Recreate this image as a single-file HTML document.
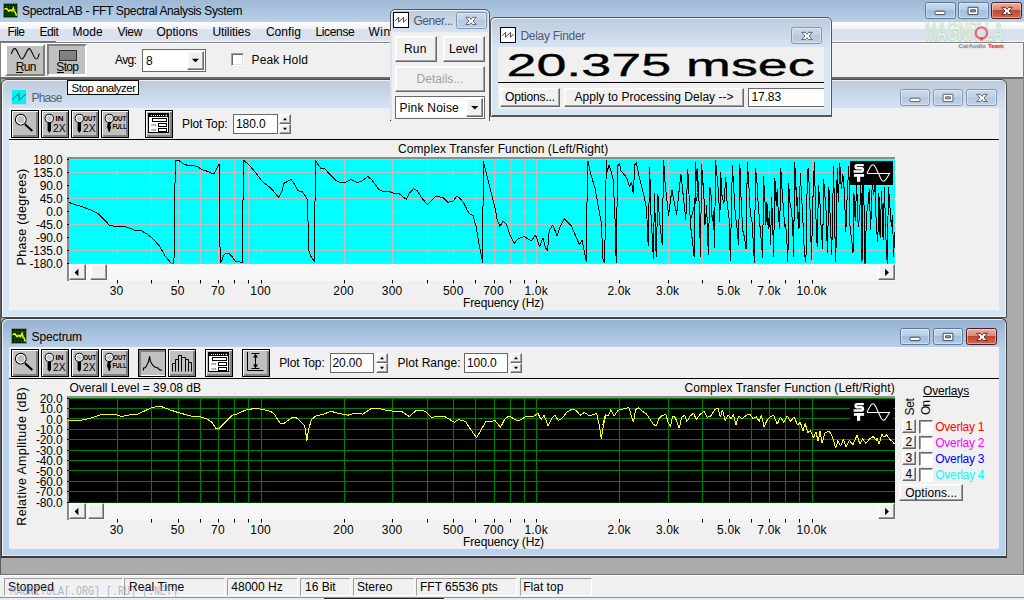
<!DOCTYPE html><html><head><meta charset="utf-8"><title>SpectraLAB</title><style>
html,body{margin:0;padding:0;}
body{width:1024px;height:600px;overflow:hidden;background:#ababab;position:relative;font-family:"Liberation Sans",sans-serif;}
div,span.t,svg{position:absolute;box-sizing:border-box;}
span.t{white-space:pre;}
.L{position:absolute;left:0;top:0;width:1024px;height:600px;overflow:hidden;}
</style></head><body>
<div style="left:0px;top:0px;width:1024px;height:22px;background:linear-gradient(#9eb8d5,#b9d1ea);"></div>
<svg style="left:3px;top:3px" width="15" height="15" viewBox="0 0 16 16"><rect x="0" y="0" width="16" height="16" fill="#8a8a8a"/><rect x="1" y="1" width="14" height="14" fill="#001800"/><path d="M4 1V15M7 1V15M10 1V15M13 1V15M1 4H15M1 7H15M1 10H15M1 13H15" stroke="#0a5a0a" stroke-width="1"/><path d="M1.5 6.5 L4 6 L6 8.5 L8 7.5 L9.5 8.5 L11 5.5 L12 9 L13 10 L14.5 13.5" stroke="#f4f400" stroke-width="1.6" fill="none"/></svg>
<span class="t" style="left:22.00px;top:2.50px;font-size:12px;line-height:16px;color:#000;letter-spacing:-0.351px;">SpectraLAB - FFT Spectral Analysis System</span>
<div style="left:925px;top:2px;width:30.5px;height:17px;background:linear-gradient(#c9daee 0%,#b7cde6 45%,#a3bddb 50%,#b4cae4 100%);border:1px solid #5f7a99;border-radius:2.5px;box-shadow:inset 0 0 0 1px rgba(255,255,255,.4);"></div>
<svg style="left:932.45px;top:4.5px" width="16" height="12" viewBox="-8 -6 16 12"><rect x="-5" y="0.2" width="10" height="3.4" rx="0.8" fill="#fff" stroke="#434a58" stroke-width="1"/></svg>
<div style="left:958px;top:2px;width:30.5px;height:17px;background:linear-gradient(#c9daee 0%,#b7cde6 45%,#a3bddb 50%,#b4cae4 100%);border:1px solid #5f7a99;border-radius:2.5px;box-shadow:inset 0 0 0 1px rgba(255,255,255,.4);"></div>
<svg style="left:965.45px;top:4.5px" width="16" height="12" viewBox="-8 -6 16 12"><path d="M-4.9 -3.7 H4.9 V3.6 H-4.9 Z M-2.4 -1.2 H2.4 V0.8 H-2.4 Z" fill="#fff" fill-rule="evenodd" stroke="#434a58" stroke-width="1" stroke-linejoin="round"/></svg>
<div style="left:991px;top:2px;width:31px;height:17px;background:linear-gradient(#e9b0a2 0%,#d98a78 45%,#c4452c 50%,#cf6a54 100%);border:1px solid #4b1a22;border-radius:2.5px;box-shadow:inset 0 0 0 1px rgba(255,255,255,.4);"></div>
<svg style="left:998.7px;top:4.5px" width="16" height="12" viewBox="-8 -6 16 12"><path d="M-5.3 -3.7 L-1.7 -3.7 L0 -1.7 L1.7 -3.7 L5.3 -3.7 L2 0 L5.3 3.6 L1.7 3.6 L0 1.7 L-1.7 3.6 L-5.3 3.6 L-2 0 Z" fill="#fff" stroke="#5a2a2a" stroke-width="1" stroke-linejoin="round"/></svg>
<div style="left:0px;top:22px;width:1024px;height:20px;background:linear-gradient(#ffffff 0%,#f1f3f9 33%,#dde2ef 36%,#dadfee 85%,#e9ecf5 100%);"></div>
<div style="left:0px;top:41px;width:56px;height:1px;background:#3c7fb1;"></div>
<div style="left:56px;top:41px;width:968px;height:1px;background:#f4f6fb;"></div>
<span class="t" style="left:7.40px;top:23.60px;font-size:12px;line-height:16px;color:#000;letter-spacing:-0.584px;">File</span>
<span class="t" style="left:39.40px;top:23.60px;font-size:12px;line-height:16px;color:#000;letter-spacing:-0.419px;">Edit</span>
<span class="t" style="left:72.40px;top:23.60px;font-size:12px;line-height:16px;color:#000;letter-spacing:0.121px;">Mode</span>
<span class="t" style="left:117.40px;top:23.60px;font-size:12px;line-height:16px;color:#000;letter-spacing:-0.252px;">View</span>
<span class="t" style="left:156.40px;top:23.60px;font-size:12px;line-height:16px;color:#000;letter-spacing:0.021px;">Options</span>
<span class="t" style="left:212.40px;top:23.60px;font-size:12px;line-height:16px;color:#000;letter-spacing:-0.075px;">Utilities</span>
<span class="t" style="left:265.90px;top:23.60px;font-size:12px;line-height:16px;color:#000;letter-spacing:0.052px;">Config</span>
<span class="t" style="left:315.40px;top:23.60px;font-size:12px;line-height:16px;color:#000;letter-spacing:-0.337px;">License</span>
<span class="t" style="left:368.40px;top:23.60px;font-size:12px;line-height:16px;color:#000;letter-spacing:0.553px;">Window</span>
<div style="left:0px;top:42px;width:1024px;height:35px;background:#f0f0f0;border-top:1px solid #808080;border-left:1px solid #808080;box-shadow:inset 1px 1px 0 #fff;"></div>
<div style="left:0px;top:77px;width:1024px;height:2px;background:#6a6a6a;"></div>
<div style="left:1023px;top:42px;width:1px;height:37px;background:#808080;"></div>
<div style="left:2px;top:43px;width:43px;height:32px;background:#fff;"></div>
<div style="left:5px;top:44px;width:40px;height:32px;background:#c0c0c0;border:2px solid;border-color:#fff #808080 #808080 #fff;"></div>
<svg style="left:5px;top:44px" width="40" height="32" viewBox="5 44 40 32"><path d="M11.5 54 C12.5 49.5 14 48.6 15 48.6 C17 48.6 19.5 59 22 59 C24.5 59 27 48.6 29.2 48.6 C31.5 48.6 33.8 59 36 59 C37.5 59 38.6 56.5 39.3 53.5" fill="none" stroke="#000" stroke-width="1.1"/></svg>
<span class="t" style="left:15.70px;top:58.80px;font-size:12px;line-height:16px;color:#000;letter-spacing:-0.671px;">Run</span>
<div style="left:16px;top:72px;width:7px;height:1px;background:#000;"></div>
<div style="left:47px;top:44px;width:40px;height:32px;background:#c0c0c0;border:2px solid;border-color:#808080 #fff #fff #808080;"></div>
<div style="left:59px;top:50px;width:18px;height:11px;background:#808080;border:1px solid #303030;"></div>
<span class="t" style="left:56.30px;top:58.80px;font-size:12px;line-height:16px;color:#000;letter-spacing:-0.671px;">Stop</span>
<div style="left:57px;top:72px;width:7px;height:1px;background:#000;"></div>
<span class="t" style="left:115.00px;top:52.00px;font-size:12px;line-height:16px;color:#000;letter-spacing:-0.628px;">Avg:</span>
<div style="left:142px;top:49px;width:64px;height:23px;background:#fff;border:1px solid #696969;"></div>
<span class="t" style="left:146.00px;top:52.80px;font-size:12px;line-height:16px;color:#000;">8</span>
<div style="left:187px;top:51px;width:17px;height:19px;background:#f0f0f0;border:1px solid;border-color:#fff #696969 #696969 #fff;box-shadow:inset -1px -1px 0 #a0a0a0,inset 1px 1px 0 #f8f8f8;"></div>
<svg style="left:187px;top:51px" width="17" height="19"><path d="M8.5 11.3 l-3.6 -3.6 h7.2 z" fill="#000"/></svg>
<div style="left:231px;top:53px;width:13px;height:13px;background:#fff;border:1px solid;border-color:#a0a0a0 #fff #fff #a0a0a0;box-shadow:inset 1px 1px 0 #696969,inset -1px -1px 0 #e3e3e3;"></div>
<span class="t" style="left:251.50px;top:52.00px;font-size:12px;line-height:16px;color:#000;letter-spacing:0.126px;">Peak Hold</span>
<div style="left:0px;top:79px;width:1024px;height:495px;background:#ababab;border-left:1px solid #5a5a5a;border-right:1px solid #808080;"></div>
<div style="left:0px;top:574px;width:1024px;height:23px;background:#f0f0f0;border-top:1px solid #747474;box-shadow:inset 0 1px 0 #fff;"></div>
<div style="left:4px;top:578px;width:119px;height:17.6px;border:1px solid;border-color:#a0a0a0 #fff #fff #a0a0a0;"></div>
<span class="t" style="left:8.00px;top:579.10px;font-size:12px;line-height:16px;color:#000;letter-spacing:0.185px;">Stopped</span>
<div style="left:124px;top:578px;width:101px;height:17.6px;border:1px solid;border-color:#a0a0a0 #fff #fff #a0a0a0;"></div>
<span class="t" style="left:129.00px;top:579.10px;font-size:12px;line-height:16px;color:#000;letter-spacing:0.147px;">Real Time</span>
<div style="left:227px;top:578px;width:71px;height:17.6px;border:1px solid;border-color:#a0a0a0 #fff #fff #a0a0a0;"></div>
<span class="t" style="left:231.30px;top:579.10px;font-size:12px;line-height:16px;color:#000;letter-spacing:0.016px;">48000 Hz</span>
<div style="left:300px;top:578px;width:51px;height:17.6px;border:1px solid;border-color:#a0a0a0 #fff #fff #a0a0a0;"></div>
<span class="t" style="left:305.00px;top:579.10px;font-size:12px;line-height:16px;color:#000;">16 Bit</span>
<div style="left:353px;top:578px;width:62px;height:17.6px;border:1px solid;border-color:#a0a0a0 #fff #fff #a0a0a0;"></div>
<span class="t" style="left:357.00px;top:579.10px;font-size:12px;line-height:16px;color:#000;">Stereo</span>
<div style="left:416px;top:578px;width:101px;height:17.6px;border:1px solid;border-color:#a0a0a0 #fff #fff #a0a0a0;"></div>
<span class="t" style="left:420.00px;top:579.10px;font-size:12px;line-height:16px;color:#000;">FFT 65536 pts</span>
<div style="left:519.5px;top:578px;width:72.5px;height:17.6px;border:1px solid;border-color:#a0a0a0 #fff #fff #a0a0a0;"></div>
<span class="t" style="left:523.30px;top:579.10px;font-size:12px;line-height:16px;color:#000;letter-spacing:-0.002px;">Flat top</span>
<div style="left:0px;top:597px;width:1024px;height:3px;background:#e8edf3;"></div>
<div style="left:324px;top:598px;width:120px;height:1px;background:#222;border-radius:1px;"></div>
<div style="left:325px;top:599px;width:118px;height:1px;background:#fff;"></div>
<div style="left:0px;top:596.5px;width:1024px;height:1px;background:#8f8f8f;"></div>
<span class="t" style="left:10px;top:587.6px;transform:scale(1,1.22);transform-origin:0 100%;font-family:'Liberation Mono',monospace;font-size:10px;line-height:12px;color:rgba(140,165,190,.75);letter-spacing:0.0px;">MAGNITOLA[.ORG] [.RU] [.NET]</span>
<div style="left:1px;top:79px;width:1006px;height:239px;background:linear-gradient(#bbcadb 0px,#c8d7e7 14px,#d6e3f1 29px,#d7e4f2 30px,#d7e4f2 100%);border:1px solid #4a4a4a;border-bottom-width:1px;border-radius:6px 6px 0 0;box-shadow:inset 1px 1px 0 rgba(255,255,255,.75),inset -1px -1px 0 #eef4fb;"></div>
<div style="left:9px;top:108px;width:990px;height:1px;background:#eef3f9;"></div>
<div style="left:9px;top:109px;width:990px;height:201px;background:#f0f0f0;"></div>
<svg style="left:11px;top:89px" width="16" height="16" viewBox="0 0 16 16"><rect x="0.5" y="0.5" width="15" height="15" fill="#00f4f4" stroke="#cdd2d6"/><path d="M1 10.6 L8 4.4 V11.3 L14.8 5" stroke="#0a4a50" stroke-width="0.85" fill="none"/></svg>
<span class="t" style="left:31.50px;top:89.50px;font-size:12px;line-height:16px;color:#525f73;letter-spacing:-0.805px;">Phase</span>
<div style="left:900px;top:89px;width:30px;height:17px;background:linear-gradient(#cbd9ea 0%,#c2d2e6 45%,#b5c8df 50%,#c0d1e5 100%);border:1px solid #8296b3;border-radius:2.5px;box-shadow:inset 0 0 0 1px rgba(255,255,255,.4);"></div>
<svg style="left:907.2px;top:91.5px" width="16" height="12" viewBox="-8 -6 16 12"><rect x="-5" y="0.2" width="10" height="3.4" rx="0.8" fill="#fff" stroke="#5a6270" stroke-width="1"/></svg>
<div style="left:933px;top:89px;width:30px;height:17px;background:linear-gradient(#cbd9ea 0%,#c2d2e6 45%,#b5c8df 50%,#c0d1e5 100%);border:1px solid #8296b3;border-radius:2.5px;box-shadow:inset 0 0 0 1px rgba(255,255,255,.4);"></div>
<svg style="left:940.2px;top:91.5px" width="16" height="12" viewBox="-8 -6 16 12"><path d="M-4.9 -3.7 H4.9 V3.6 H-4.9 Z M-2.4 -1.2 H2.4 V0.8 H-2.4 Z" fill="#fff" fill-rule="evenodd" stroke="#5a6270" stroke-width="1" stroke-linejoin="round"/></svg>
<div style="left:966px;top:89px;width:31px;height:17px;background:linear-gradient(#cbd9ea 0%,#c2d2e6 45%,#b5c8df 50%,#c0d1e5 100%);border:1px solid #8296b3;border-radius:2.5px;box-shadow:inset 0 0 0 1px rgba(255,255,255,.4);"></div>
<svg style="left:973.7px;top:91.5px" width="16" height="12" viewBox="-8 -6 16 12"><path d="M-5.3 -3.7 L-1.7 -3.7 L0 -1.7 L1.7 -3.7 L5.3 -3.7 L2 0 L5.3 3.6 L1.7 3.6 L0 1.7 L-1.7 3.6 L-5.3 3.6 L-2 0 Z" fill="#fff" stroke="#5a6270" stroke-width="1" stroke-linejoin="round"/></svg>
<div style="left:11px;top:110px;width:28px;height:28px;background:#c0c0c0;border:1px solid #000;box-shadow:inset 1px 1px 0 #fff,inset -1px -1px 0 #808080,inset -2px -2px 0 #808080;"></div>
<svg style="left:11px;top:110px" width="28" height="28" viewBox="0 0 28 28"><circle cx="9.8" cy="9.7" r="5.3" fill="#c0c0c0" stroke="#000" stroke-width="1.1"/><circle cx="9.8" cy="9.7" r="4.2" fill="none" stroke="#fff" stroke-width="1.1"/><path d="M14 14.2 L21.3 21" stroke="#000" stroke-width="2.1"/></svg>
<div style="left:41px;top:110px;width:28px;height:28px;background:#c0c0c0;border:1px solid #000;box-shadow:inset 1px 1px 0 #fff,inset -1px -1px 0 #808080,inset -2px -2px 0 #808080;"></div>
<svg style="left:41px;top:110px" width="28" height="28" viewBox="0 0 28 28"><circle cx="8.3" cy="8.4" r="4.1" fill="#c8c8c8" stroke="#000" stroke-width="1"/><circle cx="8.3" cy="8.4" r="3.1" fill="none" stroke="#fff" stroke-width="0.9"/><path d="M6.6 12.9 H10 V20.3 L8.3 23 L6.6 20.3 Z" fill="#000"/><text x="14.5" y="11" font-family="Liberation Sans" font-size="7.5" font-weight="bold" fill="#000" textLength="8" lengthAdjust="spacingAndGlyphs">IN</text><text x="12" y="21.5" font-family="Liberation Sans" font-size="11.5" fill="#000" textLength="12.5" lengthAdjust="spacingAndGlyphs">2X</text></svg>
<div style="left:71px;top:110px;width:28px;height:28px;background:#c0c0c0;border:1px solid #000;box-shadow:inset 1px 1px 0 #fff,inset -1px -1px 0 #808080,inset -2px -2px 0 #808080;"></div>
<svg style="left:71px;top:110px" width="28" height="28" viewBox="0 0 28 28"><circle cx="8.3" cy="8.4" r="4.1" fill="#c8c8c8" stroke="#000" stroke-width="1"/><circle cx="8.3" cy="8.4" r="3.1" fill="none" stroke="#fff" stroke-width="0.9"/><path d="M6.6 12.9 H10 V20.3 L8.3 23 L6.6 20.3 Z" fill="#000"/><text x="12.5" y="11" font-family="Liberation Sans" font-size="7.5" font-weight="bold" fill="#000" textLength="12.5" lengthAdjust="spacingAndGlyphs">OUT</text><text x="12" y="21.5" font-family="Liberation Sans" font-size="11.5" fill="#000" textLength="12.5" lengthAdjust="spacingAndGlyphs">2X</text></svg>
<div style="left:101px;top:110px;width:28px;height:28px;background:#c0c0c0;border:1px solid #000;box-shadow:inset 1px 1px 0 #fff,inset -1px -1px 0 #808080,inset -2px -2px 0 #808080;"></div>
<svg style="left:101px;top:110px" width="28" height="28" viewBox="0 0 28 28"><circle cx="8.3" cy="8.4" r="4.1" fill="#c8c8c8" stroke="#000" stroke-width="1"/><circle cx="8.3" cy="8.4" r="3.1" fill="none" stroke="#fff" stroke-width="0.9"/><path d="M7.5 12.3 L6.3 16.5 L8.3 22 L9.6 17 L8.8 15 L10 12.5 Z" fill="#000" stroke="#000" stroke-width="0.8"/><text x="12.5" y="11" font-family="Liberation Sans" font-size="7.5" font-weight="bold" fill="#000" textLength="12.5" lengthAdjust="spacingAndGlyphs">OUT</text><text x="11.5" y="19" font-family="Liberation Sans" font-size="7" font-weight="bold" fill="#000" textLength="14" lengthAdjust="spacingAndGlyphs">FULL</text></svg>
<div style="left:145px;top:110px;width:28px;height:28px;background:#c0c0c0;border:1px solid #000;box-shadow:inset 1px 1px 0 #fff,inset -1px -1px 0 #808080,inset -2px -2px 0 #808080;"></div>
<svg style="left:145px;top:110px" width="28" height="28" viewBox="0 0 28 28"><rect x="3.5" y="3.5" width="20" height="19" fill="#fff" stroke="#000" stroke-width="1"/><rect x="4" y="4" width="19" height="3" fill="#000"/><path d="M6 5.5 H19" stroke="#fff" stroke-width="1" stroke-dasharray="1 1"/><rect x="20.5" y="4.8" width="1.5" height="1.4" fill="#fff"/><rect x="7.5" y="8.5" width="14" height="3" fill="#fff" stroke="#000" stroke-width="1"/><rect x="13.5" y="13.5" width="8" height="3" fill="#fff" stroke="#000" stroke-width="1"/><rect x="13.5" y="18.5" width="8" height="3" fill="#fff" stroke="#000" stroke-width="1"/><path d="M6.5 15 H11 M6.5 20 H11" stroke="#222" stroke-width="1.2" stroke-dasharray="1.1 0.6"/></svg>
<span class="t" style="left:182.00px;top:116.30px;font-size:12px;line-height:16px;color:#000;letter-spacing:-0.114px;">Plot Top:</span>
<div style="left:232.5px;top:114px;width:45px;height:20px;background:#fff;border:1px solid #696969;"></div>
<span class="t" style="left:236.00px;top:116.30px;font-size:12px;line-height:16px;color:#000;letter-spacing:-0.106px;">180.0</span>
<div style="left:279px;top:114px;width:12px;height:10px;background:#f0f0f0;border:1px solid;border-color:#fff #696969 #696969 #fff;box-shadow:inset -1px -1px 0 #a0a0a0,inset 1px 1px 0 #f8f8f8;"></div>
<div style="left:279px;top:124px;width:12px;height:10px;background:#f0f0f0;border:1px solid;border-color:#fff #696969 #696969 #fff;box-shadow:inset -1px -1px 0 #a0a0a0,inset 1px 1px 0 #f8f8f8;"></div>
<svg style="left:279px;top:114px" width="12" height="20"><path d="M6 3.8 L8 6.3 H4 Z M6 16.2 L8 13.7 H4 Z" fill="#000"/></svg>
<div style="left:9px;top:139px;width:990px;height:1px;background:#000;"></div>
<span class="t" style="left:398.00px;top:140.50px;font-size:12px;line-height:16px;color:#000;letter-spacing:0.094px;">Complex Transfer Function (Left/Right)</span>
<div style="left:67px;top:157px;width:828px;height:106.5px;background:#00ffff;border-top:2px solid #8c8c8c;border-left:2px solid #8c8888;"></div>
<svg style="left:0px;top:0px" width="1024" height="600" viewBox="0 0 1024 600"><defs><clipPath id="cp"><rect x="69" y="159" width="826" height="104.5"/></clipPath></defs><g clip-path="url(#cp)"><path d="M68 159.5 H896 M68 172.5 H896 M68 185.5 H896 M68 198.5 H896 M68 211.5 H896 M68 224.5 H896 M68 237.5 H896 M68 250.5 H896 M68 263.5 H896 M117.5 159 V264 M151.5 159 V264 M178.5 159 V264 M200.5 159 V264 M218.5 159 V264 M234.5 159 V264 M248.5 159 V264 M261.5 159 V264 M344.5 159 V264 M392.5 159 V264 M427.5 159 V264 M453.5 159 V264 M475.5 159 V264 M494.5 159 V264 M510.5 159 V264 M524.5 159 V264 M536.5 159 V264 M619.5 159 V264 M668.5 159 V264 M702.5 159 V264 M729.5 159 V264 M751.5 159 V264 M769.5 159 V264 M785.5 159 V264 M799.5 159 V264 M812.5 159 V264 " stroke="#c0c0c0" stroke-width="1" fill="none"/><path d="M68.6 202.2 L75.0 204.8 L81.5 206.5 L90.1 209.7 L98.7 214.0 L109.4 225.2 L115.9 226.5 L122.3 226.1 L128.8 227.8 L135.2 230.4 L141.2 230.6 L148.1 234.9 L153.5 239.2 L159.9 246.7 L165.3 256.3 L171.3 263.2 L173.9 263.2 L174.5 237.0 L174.9 185.4 L176.0 160.3 L178.6 160.3 L182.5 163.3 L187.8 165.5 L193.2 165.5 L197.5 166.8 L202.9 170.0 L208.2 171.5 L212.1 173.6 L214.3 173.2 L216.8 168.3 L219.2 164.0 L219.4 212.3 L220.3 262.8 L221.6 260.6 L224.4 254.2 L228.7 253.3 L231.9 256.3 L235.1 261.1 L239.4 261.9 L242.2 263.2 L242.8 212.3 L243.7 160.3 L249.1 165.0 L255.5 172.6 L262.0 181.2 L269.5 187.0 L274.8 193.0 L270.0 187.0 L278.6 197.3 L281.8 191.9 L284.0 183.3 L287.2 181.6 L290.8 179.4 L293.6 182.7 L297.9 190.8 L302.2 191.5 L305.4 196.2 L307.2 199.0 L308.0 220.9 L308.9 251.0 L310.8 256.3 L314.5 261.7 L314.9 211.2 L315.5 160.3 L317.7 164.0 L320.9 168.3 L324.8 168.9 L330.2 174.7 L335.5 180.1 L339.8 182.4 L345.2 182.4 L351.2 179.4 L357.0 182.4 L361.3 181.6 L367.8 176.4 L372.1 180.1 L378.5 189.1 L382.8 191.3 L389.2 191.5 L393.5 193.2 L398.9 193.6 L406.4 199.4 L409.6 193.0 L413.5 188.7 L417.2 190.8 L422.5 199.0 L427.5 204.6 L435.9 196.2 L443.0 197.7 L447.9 202.2 L452.6 201.6 L456.9 196.2 L460.1 198.3 L464.4 204.1 L467.7 211.2 L470.2 214.5 L473.0 215.5 L476.3 227.3 L479.5 246.7 L482.7 262.8 L482.9 212.3 L483.8 161.2 L483.4 161.8 L486.4 173.6 L490.7 190.8 L495.0 208.0 L497.2 219.8 L499.8 226.3 L503.2 221.3 L506.2 224.1 L510.1 234.9 L514.4 243.5 L517.6 239.2 L524.0 236.4 L528.3 239.2 L531.6 240.7 L534.8 235.5 L536.3 237.0 L539.7 246.7 L542.9 237.7 L545.5 247.8 L547.5 251.0 L549.2 230.6 L552.6 225.2 L554.8 229.9 L556.9 235.9 L560.6 225.6 L564.4 218.8 L568.1 222.4 L571.3 225.6 L575.6 235.9 L579.3 244.5 L582.1 240.2 L584.2 251.0 L586.3 261.7 L586.8 212.3 L587.9 160.7 L590.6 173.6 L594.9 187.6 L598.2 205.9 L601.4 223.0 L602.9 258.5 L604.6 263.2 L605.5 214.5 L606.3 160.3 L607.4 171.5 L608.9 165.0 L611.1 171.5 L613.2 180.1 L614.9 214.5 L616.2 262.8 L616.9 214.5 L617.7 166.1 L619.6 163.3 L620.7 170.4 L626.1 176.9 L629.7 186.5 L631.5 182.2 L633.4 194.0 L634.7 165.0 L636.4 162.5 L639.0 175.8 L643.3 193.0 L646.5 208.0 L648.2 245.6 L649.7 167.2 L651.0 214.5 L653.4 258.5 L654.5 193.0 L656.2 257.4 L657.9 194.0 L659.6 220.9 L662.2 244.5 L663.7 160.3 L665.2 184.4 L668.6 215.5 L671.9 189.7 L676.6 214.5 L680.9 173.6 L685.8 219.8 L687.8 169.3 L690.5 225.2 L694.2 256.3 L695.5 162.9 L698.1 193.0 L690.0 221.9 L691.9 236.0 L694.1 256.7 L695.7 162.5 L696.6 181.4 L697.2 168.2 L698.5 188.9 L699.4 209.6 L700.4 256.7 L701.7 164.0 L702.8 185.1 L703.6 183.3 L704.7 224.7 L705.4 222.8 L706.6 204.9 L708.3 254.8 L709.8 187.0 L711.1 195.5 L712.2 220.9 L713.5 211.5 L714.5 248.2 L715.6 160.3 L717.3 179.5 L718.6 192.7 L719.8 221.9 L720.7 172.0 L722.0 195.5 L723.9 204.0 L725.8 176.7 L726.7 198.3 L727.7 207.7 L729.2 219.0 L730.3 260.5 L732.4 165.4 L733.7 187.0 L735.2 213.4 L736.7 224.7 L738.6 245.4 L739.9 164.4 L741.2 202.1 L742.7 230.3 L744.6 237.9 L746.1 249.2 L747.3 162.5 L748.8 183.3 L750.3 213.4 L752.2 222.8 L754.4 263.3 L755.5 168.2 L756.9 181.4 L758.2 204.0 L759.7 222.8 L761.2 239.8 L762.7 257.7 L763.5 175.7 L765.0 202.1 L765.9 224.7 L766.9 202.1 L768.2 228.5 L769.5 211.5 L770.6 245.4 L771.6 197.4 L772.9 230.3 L773.6 256.7 L774.8 177.6 L776.3 205.9 L777.2 188.9 L778.5 217.2 L779.7 228.5 L780.8 168.2 L782.3 194.6 L783.6 209.6 L784.6 226.6 L785.7 224.7 L787.0 243.5 L787.9 262.4 L788.7 183.3 L789.8 202.1 L791.3 209.6 L792.7 224.7 L793.6 256.7 L794.7 162.5 L796.0 187.0 L797.4 200.2 L798.9 228.5 L795.0 173.8 L796.5 198.3 L797.8 217.1 L799.1 228.4 L800.3 172.9 L801.6 196.4 L802.9 220.9 L804.4 252.9 L805.9 262.3 L807.4 170.1 L808.5 168.2 L810.1 211.5 L811.6 260.4 L812.3 219.0 L813.3 187.0 L814.4 162.5 L815.7 211.5 L817.2 247.2 L818.5 185.1 L820.0 203.9 L821.3 230.3 L822.7 249.1 L823.6 179.5 L824.7 192.6 L826.1 211.5 L827.4 252.9 L828.9 187.0 L830.2 217.1 L831.7 254.7 L833.6 166.3 L834.9 234.0 L835.8 262.3 L837.2 168.2 L838.3 202.0 L839.8 163.5 L841.3 188.9 L842.8 173.8 L844.3 190.8 L845.8 232.2 L847.3 192.6 L848.8 166.3 L850.1 230.3 L851.5 237.8 L853.0 252.9 L853.9 192.6 L855.2 220.9 L856.7 185.1 L858.2 226.5 L859.5 217.1 L860.9 185.1 L862.0 262.3 L863.3 162.5 L865.0 264.1 L866.5 215.2 L868.0 203.9 L869.3 188.9 L870.6 230.3 L872.2 185.1 L873.7 194.5 L875.0 183.2 L876.3 226.5 L877.8 241.6 L878.9 192.6 L880.1 237.8 L881.6 190.8 L883.1 239.7 L884.4 187.0 L885.9 237.8 L887.2 264.1 L888.5 187.0 L890.0 207.7 L891.3 226.5 L892.5 215.2 L893.6 256.6 L894.7 232.2" stroke="#000" stroke-width="1" fill="none" stroke-linejoin="bevel" shape-rendering="crispEdges"/></g></svg>
<div style="left:67px;top:159px;width:2px;height:1px;background:#000;"></div>
<div style="left:67px;top:172px;width:2px;height:1px;background:#000;"></div>
<div style="left:67px;top:185px;width:2px;height:1px;background:#000;"></div>
<div style="left:67px;top:198px;width:2px;height:1px;background:#000;"></div>
<div style="left:67px;top:211px;width:2px;height:1px;background:#000;"></div>
<div style="left:67px;top:224px;width:2px;height:1px;background:#000;"></div>
<div style="left:67px;top:237px;width:2px;height:1px;background:#000;"></div>
<div style="left:67px;top:250px;width:2px;height:1px;background:#000;"></div>
<div style="left:67px;top:263px;width:2px;height:1px;background:#000;"></div>
<svg style="left:850px;top:161px" width="43" height="24" viewBox="0 0 43 24"><rect width="43" height="24" fill="#000"/><path d="M13.8 4.1 H6.9 Q5.6 4.1 5.6 5.6 Q5.6 7.3 6.9 7.3 H11.5 Q12.9 7.3 12.9 8.9 Q12.9 10.5 11.5 10.5 H3.6" fill="none" stroke="#fff" stroke-width="2.4"/><rect x="3.9" y="13.1" width="10.2" height="2.7" fill="#fff"/><rect x="7" y="13.1" width="3.2" height="7.7" fill="#fff"/><path d="M17 12 L20.3 6 Q22.9 1.6 25.4 6 L31 18 Q33.4 22.3 36 18.2 L39.9 12 M17 12.4 H40" fill="none" stroke="#fff" stroke-width="1.05"/></svg>
<div style="left:68px;top:263.8px;width:827.5px;height:17px;background:#f7f7f7;"></div>
<div style="left:68.5px;top:264.3px;width:17px;height:16px;background:#f0f0f0;border:1px solid;border-color:#fff #696969 #696969 #fff;box-shadow:inset -1px -1px 0 #a0a0a0,inset 1px 1px 0 #f8f8f8;"></div>
<div style="left:90px;top:264.3px;width:16.5px;height:16px;background:#f0f0f0;border:1px solid;border-color:#fff #696969 #696969 #fff;box-shadow:inset -1px -1px 0 #a0a0a0,inset 1px 1px 0 #f8f8f8;"></div>
<div style="left:878px;top:264.3px;width:17px;height:16px;background:#f0f0f0;border:1px solid;border-color:#fff #696969 #696969 #fff;box-shadow:inset -1px -1px 0 #a0a0a0,inset 1px 1px 0 #f8f8f8;"></div>
<svg style="left:68px;top:263.8px" width="828" height="17"><path d="M6.6 8.5 l3.8 -3.8 v7.6 z" fill="#000"/><path d="M820.9 8.5 l-3.8 -3.8 v7.6 z" fill="#000"/></svg>
<div style="left:67px;top:264px;width:2px;height:17px;background:#8c8888;"></div>
<svg style="left:0px;top:280px" width="1024" height="4"><path d="M117.5 0 V3.5 M151.5 0 V3.5 M178.5 0 V3.5 M200.5 0 V3.5 M218.5 0 V3.5 M234.5 0 V3.5 M248.5 0 V3.5 M261.5 0 V3.5 M344.5 0 V3.5 M392.5 0 V3.5 M427.5 0 V3.5 M453.5 0 V3.5 M475.5 0 V3.5 M494.5 0 V3.5 M510.5 0 V3.5 M524.5 0 V3.5 M536.5 0 V3.5 M619.5 0 V3.5 M668.5 0 V3.5 M702.5 0 V3.5 M729.5 0 V3.5 M751.5 0 V3.5 M769.5 0 V3.5 M785.5 0 V3.5 M799.5 0 V3.5 M812.5 0 V3.5 " stroke="#000" stroke-width="1"/></svg>
<span class="t" style="left:109.74px;top:283.00px;font-size:12px;line-height:16px;color:#000;letter-spacing:0.200px;">30</span>
<span class="t" style="left:170.86px;top:283.00px;font-size:12px;line-height:16px;color:#000;letter-spacing:0.200px;">50</span>
<span class="t" style="left:211.12px;top:283.00px;font-size:12px;line-height:16px;color:#000;letter-spacing:0.200px;">70</span>
<span class="t" style="left:250.36px;top:283.00px;font-size:12px;line-height:16px;color:#000;letter-spacing:0.200px;">100</span>
<span class="t" style="left:333.29px;top:283.00px;font-size:12px;line-height:16px;color:#000;letter-spacing:0.200px;">200</span>
<span class="t" style="left:381.80px;top:283.00px;font-size:12px;line-height:16px;color:#000;letter-spacing:0.200px;">300</span>
<span class="t" style="left:442.92px;top:283.00px;font-size:12px;line-height:16px;color:#000;letter-spacing:0.200px;">500</span>
<span class="t" style="left:483.18px;top:283.00px;font-size:12px;line-height:16px;color:#000;letter-spacing:0.200px;">700</span>
<span class="t" style="left:524.49px;top:283.00px;font-size:12px;line-height:16px;color:#000;letter-spacing:0.170px;">1.0k</span>
<span class="t" style="left:607.42px;top:283.00px;font-size:12px;line-height:16px;color:#000;letter-spacing:0.170px;">2.0k</span>
<span class="t" style="left:655.93px;top:283.00px;font-size:12px;line-height:16px;color:#000;letter-spacing:0.170px;">3.0k</span>
<span class="t" style="left:717.05px;top:283.00px;font-size:12px;line-height:16px;color:#000;letter-spacing:0.170px;">5.0k</span>
<span class="t" style="left:757.31px;top:283.00px;font-size:12px;line-height:16px;color:#000;letter-spacing:0.170px;">7.0k</span>
<span class="t" style="left:796.55px;top:283.00px;font-size:12px;line-height:16px;color:#000;letter-spacing:0.176px;">10.0k</span>
<span class="t" style="left:463.00px;top:294.50px;font-size:12px;line-height:16px;color:#000;letter-spacing:-0.121px;">Frequency (Hz)</span>
<span class="t" style="left:33.37px;top:152.30px;font-size:12px;line-height:16px;color:#000;letter-spacing:-0.180px;">180.0</span>
<span class="t" style="left:33.37px;top:165.30px;font-size:12px;line-height:16px;color:#000;letter-spacing:-0.180px;">135.0</span>
<span class="t" style="left:39.85px;top:178.30px;font-size:12px;line-height:16px;color:#000;letter-spacing:-0.175px;">90.0</span>
<span class="t" style="left:39.85px;top:191.30px;font-size:12px;line-height:16px;color:#000;letter-spacing:-0.175px;">45.0</span>
<span class="t" style="left:46.32px;top:204.30px;font-size:12px;line-height:16px;color:#000;letter-spacing:-0.167px;">0.0</span>
<span class="t" style="left:35.97px;top:217.30px;font-size:12px;line-height:16px;color:#000;letter-spacing:-0.164px;">-45.0</span>
<span class="t" style="left:35.97px;top:230.30px;font-size:12px;line-height:16px;color:#000;letter-spacing:-0.164px;">-90.0</span>
<span class="t" style="left:29.50px;top:243.30px;font-size:12px;line-height:16px;color:#000;letter-spacing:-0.170px;">-135.0</span>
<span class="t" style="left:29.50px;top:256.30px;font-size:12px;line-height:16px;color:#000;letter-spacing:-0.170px;">-180.0</span>
<span class="t" style="left:-27.00px;top:209.00px;width:97.00px;height:16px;line-height:16px;font-size:12.5px;color:#000;letter-spacing:0.306px;transform:rotate(-90deg);transform-origin:50% 50%;">Phase (degrees)</span>
<div style="left:1px;top:318px;width:1006px;height:239.5px;background:linear-gradient(#96b1d0 0px,#a7c0dd 14px,#b8d0e9 29px,#b9d1ea 30px,#b9d1ea 100%);border:1px solid #3a3a3a;border-bottom-width:2px;border-radius:6px 6px 0 0;box-shadow:inset 1px 1px 0 rgba(255,255,255,.75),inset -1px -1px 0 #c8f0ff;"></div>
<div style="left:9px;top:347px;width:990px;height:1px;background:#f4f8fc;"></div>
<div style="left:9px;top:348px;width:990px;height:201px;background:#f0f0f0;"></div>
<svg style="left:11px;top:328px" width="16" height="16" viewBox="0 0 16 16"><rect x="0" y="0" width="16" height="16" fill="#8a8a8a"/><rect x="1" y="1" width="14" height="14" fill="#001800"/><path d="M4 1V15M7 1V15M10 1V15M13 1V15M1 4H15M1 7H15M1 10H15M1 13H15" stroke="#0a5a0a" stroke-width="1"/><path d="M1.5 6.5 L4 6 L6 8.5 L8 7.5 L9.5 8.5 L11 5.5 L12 9 L13 10 L14.5 13.5" stroke="#f4f400" stroke-width="1.6" fill="none"/></svg>
<span class="t" style="left:31.50px;top:328.50px;font-size:12px;line-height:16px;color:#000;letter-spacing:-0.106px;">Spectrum</span>
<div style="left:900px;top:328px;width:30px;height:17px;background:linear-gradient(#c9daee 0%,#b7cde6 45%,#a3bddb 50%,#b4cae4 100%);border:1px solid #5f7a99;border-radius:2.5px;box-shadow:inset 0 0 0 1px rgba(255,255,255,.4);"></div>
<svg style="left:907.2px;top:330.5px" width="16" height="12" viewBox="-8 -6 16 12"><rect x="-5" y="0.2" width="10" height="3.4" rx="0.8" fill="#fff" stroke="#434a58" stroke-width="1"/></svg>
<div style="left:933px;top:328px;width:30px;height:17px;background:linear-gradient(#c9daee 0%,#b7cde6 45%,#a3bddb 50%,#b4cae4 100%);border:1px solid #5f7a99;border-radius:2.5px;box-shadow:inset 0 0 0 1px rgba(255,255,255,.4);"></div>
<svg style="left:940.2px;top:330.5px" width="16" height="12" viewBox="-8 -6 16 12"><path d="M-4.9 -3.7 H4.9 V3.6 H-4.9 Z M-2.4 -1.2 H2.4 V0.8 H-2.4 Z" fill="#fff" fill-rule="evenodd" stroke="#434a58" stroke-width="1" stroke-linejoin="round"/></svg>
<div style="left:966px;top:328px;width:31px;height:17px;background:linear-gradient(#e9b0a2 0%,#d98a78 45%,#c4452c 50%,#cf6a54 100%);border:1px solid #4b1a22;border-radius:2.5px;box-shadow:inset 0 0 0 1px rgba(255,255,255,.4);"></div>
<svg style="left:973.7px;top:330.5px" width="16" height="12" viewBox="-8 -6 16 12"><path d="M-5.3 -3.7 L-1.7 -3.7 L0 -1.7 L1.7 -3.7 L5.3 -3.7 L2 0 L5.3 3.6 L1.7 3.6 L0 1.7 L-1.7 3.6 L-5.3 3.6 L-2 0 Z" fill="#fff" stroke="#5a2a2a" stroke-width="1" stroke-linejoin="round"/></svg>
<div style="left:11px;top:349px;width:28px;height:28px;background:#c0c0c0;border:1px solid #000;box-shadow:inset 1px 1px 0 #fff,inset -1px -1px 0 #808080,inset -2px -2px 0 #808080;"></div>
<svg style="left:11px;top:349px" width="28" height="28" viewBox="0 0 28 28"><circle cx="9.8" cy="9.7" r="5.3" fill="#c0c0c0" stroke="#000" stroke-width="1.1"/><circle cx="9.8" cy="9.7" r="4.2" fill="none" stroke="#fff" stroke-width="1.1"/><path d="M14 14.2 L21.3 21" stroke="#000" stroke-width="2.1"/></svg>
<div style="left:41px;top:349px;width:28px;height:28px;background:#c0c0c0;border:1px solid #000;box-shadow:inset 1px 1px 0 #fff,inset -1px -1px 0 #808080,inset -2px -2px 0 #808080;"></div>
<svg style="left:41px;top:349px" width="28" height="28" viewBox="0 0 28 28"><circle cx="8.3" cy="8.4" r="4.1" fill="#c8c8c8" stroke="#000" stroke-width="1"/><circle cx="8.3" cy="8.4" r="3.1" fill="none" stroke="#fff" stroke-width="0.9"/><path d="M6.6 12.9 H10 V20.3 L8.3 23 L6.6 20.3 Z" fill="#000"/><text x="14.5" y="11" font-family="Liberation Sans" font-size="7.5" font-weight="bold" fill="#000" textLength="8" lengthAdjust="spacingAndGlyphs">IN</text><text x="12" y="21.5" font-family="Liberation Sans" font-size="11.5" fill="#000" textLength="12.5" lengthAdjust="spacingAndGlyphs">2X</text></svg>
<div style="left:71px;top:349px;width:28px;height:28px;background:#c0c0c0;border:1px solid #000;box-shadow:inset 1px 1px 0 #fff,inset -1px -1px 0 #808080,inset -2px -2px 0 #808080;"></div>
<svg style="left:71px;top:349px" width="28" height="28" viewBox="0 0 28 28"><circle cx="8.3" cy="8.4" r="4.1" fill="#c8c8c8" stroke="#000" stroke-width="1"/><circle cx="8.3" cy="8.4" r="3.1" fill="none" stroke="#fff" stroke-width="0.9"/><path d="M6.6 12.9 H10 V20.3 L8.3 23 L6.6 20.3 Z" fill="#000"/><text x="12.5" y="11" font-family="Liberation Sans" font-size="7.5" font-weight="bold" fill="#000" textLength="12.5" lengthAdjust="spacingAndGlyphs">OUT</text><text x="12" y="21.5" font-family="Liberation Sans" font-size="11.5" fill="#000" textLength="12.5" lengthAdjust="spacingAndGlyphs">2X</text></svg>
<div style="left:101px;top:349px;width:28px;height:28px;background:#c0c0c0;border:1px solid #000;box-shadow:inset 1px 1px 0 #fff,inset -1px -1px 0 #808080,inset -2px -2px 0 #808080;"></div>
<svg style="left:101px;top:349px" width="28" height="28" viewBox="0 0 28 28"><circle cx="8.3" cy="8.4" r="4.1" fill="#c8c8c8" stroke="#000" stroke-width="1"/><circle cx="8.3" cy="8.4" r="3.1" fill="none" stroke="#fff" stroke-width="0.9"/><path d="M7.5 12.3 L6.3 16.5 L8.3 22 L9.6 17 L8.8 15 L10 12.5 Z" fill="#000" stroke="#000" stroke-width="0.8"/><text x="12.5" y="11" font-family="Liberation Sans" font-size="7.5" font-weight="bold" fill="#000" textLength="12.5" lengthAdjust="spacingAndGlyphs">OUT</text><text x="11.5" y="19" font-family="Liberation Sans" font-size="7" font-weight="bold" fill="#000" textLength="14" lengthAdjust="spacingAndGlyphs">FULL</text></svg>
<div style="left:138px;top:349px;width:28px;height:28px;background:#c0c0c0;border:1px solid #000;box-shadow:inset 1px 1px 0 #808080,inset 2px 2px 0 #808080,inset 0 -1px 0 #fff;"></div>
<svg style="left:138px;top:349px" width="28" height="28" viewBox="0 0 28 28"><path d="M5.4 21.4 V19.2 L7.5 18.6 L9 15.8 L10.4 13 L11.6 7.3 L12.4 12.3 L14.4 15.7 L16.4 17.8 L19.8 19.1 L21.9 20.9 L24 21.2" fill="none" stroke="#000" stroke-width="1.1"/></svg>
<div style="left:168px;top:349px;width:28px;height:28px;background:#c0c0c0;border:1px solid #000;box-shadow:inset 1px 1px 0 #fff,inset -1px -1px 0 #808080,inset -2px -2px 0 #808080;"></div>
<svg style="left:168px;top:349px" width="28" height="28" viewBox="0 0 28 28"><path d="M4.5 22.5 V14.5 H7.5 V22.5 M7.5 14.5 V10.5 H10.5 V22.5 M10.5 10.5 V6.5 H13.5 V22.5 M13.5 8.5 H17.5 V22.5 M17.5 10.5 H20.5 V22.5 M20.5 13.5 H23.5 V22.5" fill="none" stroke="#000" stroke-width="1"/></svg>
<div style="left:205px;top:349px;width:28px;height:28px;background:#c0c0c0;border:1px solid #000;box-shadow:inset 1px 1px 0 #fff,inset -1px -1px 0 #808080,inset -2px -2px 0 #808080;"></div>
<svg style="left:205px;top:349px" width="28" height="28" viewBox="0 0 28 28"><rect x="3.5" y="3.5" width="20" height="19" fill="#fff" stroke="#000" stroke-width="1"/><rect x="4" y="4" width="19" height="3" fill="#000"/><path d="M6 5.5 H19" stroke="#fff" stroke-width="1" stroke-dasharray="1 1"/><rect x="20.5" y="4.8" width="1.5" height="1.4" fill="#fff"/><rect x="7.5" y="8.5" width="14" height="3" fill="#fff" stroke="#000" stroke-width="1"/><rect x="13.5" y="13.5" width="8" height="3" fill="#fff" stroke="#000" stroke-width="1"/><rect x="13.5" y="18.5" width="8" height="3" fill="#fff" stroke="#000" stroke-width="1"/><path d="M6.5 15 H11 M6.5 20 H11" stroke="#222" stroke-width="1.2" stroke-dasharray="1.1 0.6"/></svg>
<div style="left:242px;top:349px;width:28px;height:28px;background:#c0c0c0;border:1px solid #000;box-shadow:inset 1px 1px 0 #fff,inset -1px -1px 0 #808080,inset -2px -2px 0 #808080;"></div>
<svg style="left:242px;top:349px" width="28" height="28" viewBox="0 0 28 28"><path d="M5.5 3 V21.5 H21.5" fill="none" stroke="#000" stroke-width="1"/><path d="M9.5 4.5 H17.5 M9.5 19.5 H17.5 M13.5 5 V19" stroke="#000" stroke-width="1" fill="none"/><path d="M13.5 4.8 L16 8.5 H11 Z M13.5 19.2 L16 15.5 H11 Z" fill="#000"/></svg>
<span class="t" style="left:279.20px;top:355.30px;font-size:12px;line-height:16px;color:#000;letter-spacing:-0.114px;">Plot Top:</span>
<div style="left:330px;top:353px;width:44px;height:20px;background:#fff;border:1px solid #696969;"></div>
<span class="t" style="left:332.50px;top:355.30px;font-size:12px;line-height:16px;color:#000;letter-spacing:-0.106px;">20.00</span>
<div style="left:376px;top:353px;width:12px;height:10px;background:#f0f0f0;border:1px solid;border-color:#fff #696969 #696969 #fff;box-shadow:inset -1px -1px 0 #a0a0a0,inset 1px 1px 0 #f8f8f8;"></div>
<div style="left:376px;top:363px;width:12px;height:10px;background:#f0f0f0;border:1px solid;border-color:#fff #696969 #696969 #fff;box-shadow:inset -1px -1px 0 #a0a0a0,inset 1px 1px 0 #f8f8f8;"></div>
<svg style="left:376px;top:353px" width="12" height="20"><path d="M6 3.8 L8 6.3 H4 Z M6 16.2 L8 13.7 H4 Z" fill="#000"/></svg>
<span class="t" style="left:397.50px;top:355.30px;font-size:12px;line-height:16px;color:#000;letter-spacing:0.027px;">Plot Range:</span>
<div style="left:464px;top:353px;width:44px;height:20px;background:#fff;border:1px solid #696969;"></div>
<span class="t" style="left:467.00px;top:355.30px;font-size:12px;line-height:16px;color:#000;letter-spacing:-0.106px;">100.0</span>
<div style="left:510px;top:353px;width:12px;height:10px;background:#f0f0f0;border:1px solid;border-color:#fff #696969 #696969 #fff;box-shadow:inset -1px -1px 0 #a0a0a0,inset 1px 1px 0 #f8f8f8;"></div>
<div style="left:510px;top:363px;width:12px;height:10px;background:#f0f0f0;border:1px solid;border-color:#fff #696969 #696969 #fff;box-shadow:inset -1px -1px 0 #a0a0a0,inset 1px 1px 0 #f8f8f8;"></div>
<svg style="left:510px;top:353px" width="12" height="20"><path d="M6 3.8 L8 6.3 H4 Z M6 16.2 L8 13.7 H4 Z" fill="#000"/></svg>
<div style="left:9px;top:378px;width:990px;height:1px;background:#000;"></div>
<span class="t" style="left:69.50px;top:380.00px;font-size:12px;line-height:16px;color:#000;letter-spacing:-0.010px;">Overall Level = 39.08 dB</span>
<span class="t" style="left:684.50px;top:380.00px;font-size:12px;line-height:16px;color:#000;letter-spacing:0.094px;">Complex Transfer Function (Left/Right)</span>
<div style="left:67px;top:396px;width:828px;height:106.5px;background:#000;border-top:2px solid #8c8c8c;border-left:2px solid #8c8888;"></div>
<svg style="left:0px;top:0px" width="1024" height="600" viewBox="0 0 1024 600"><defs><clipPath id="cs"><rect x="68" y="398" width="827" height="104.5"/></clipPath></defs><g clip-path="url(#cs)"><path d="M68 398.5 H896 M68 408.5 H896 M68 418.5 H896 M68 429.5 H896 M68 439.5 H896 M68 450.5 H896 M68 460.5 H896 M68 470.5 H896 M68 481.5 H896 M68 491.5 H896 M68 502.5 H896 M117.5 398 V503 M151.5 398 V503 M178.5 398 V503 M200.5 398 V503 M218.5 398 V503 M234.5 398 V503 M248.5 398 V503 M261.5 398 V503 M344.5 398 V503 M392.5 398 V503 M427.5 398 V503 M453.5 398 V503 M475.5 398 V503 M494.5 398 V503 M510.5 398 V503 M524.5 398 V503 M536.5 398 V503 M619.5 398 V503 M668.5 398 V503 M702.5 398 V503 M729.5 398 V503 M751.5 398 V503 M769.5 398 V503 M785.5 398 V503 M799.5 398 V503 M812.5 398 V503 " stroke="#008000" stroke-width="1.1" fill="none"/><rect x="850" y="400" width="43" height="24" fill="#000"/><path d="M68.2 420.1 L81.9 420.1 L88.7 418.7 L101.0 414.6 L116.1 414.6 L121.5 416.5 L131.1 414.6 L137.9 414.1 L150.2 408.3 L157.1 406.4 L162.5 407.0 L169.4 409.7 L180.3 413.2 L191.3 416.0 L200.8 416.8 L207.7 419.3 L211.8 422.3 L215.9 428.3 L219.1 428.3 L224.1 423.4 L232.3 415.2 L236.4 414.1 L245.9 410.0 L255.5 408.3 L263.7 409.7 L270.6 411.3 L274.7 414.6 L280.1 423.4 L284.2 423.4 L288.3 420.1 L292.4 417.3 L296.5 417.9 L302.0 422.8 L304.7 425.5 L306.9 440.6 L308.8 428.3 L311.6 419.5 L315.7 416.0 L323.9 414.1 L330.7 411.3 L336.2 412.4 L330.0 411.3 L338.2 413.2 L347.8 415.2 L354.6 413.2 L362.8 414.1 L371.0 408.6 L377.9 408.3 L384.7 410.0 L392.9 411.1 L402.5 411.9 L409.3 416.5 L416.1 410.5 L421.6 410.0 L425.7 411.9 L431.2 417.3 L438.0 416.5 L444.8 416.5 L454.4 422.3 L458.5 419.5 L465.4 421.4 L470.8 429.6 L476.6 437.9 L480.4 431.0 L485.9 421.4 L495.4 420.9 L500.4 427.5 L505.0 418.7 L509.1 416.0 L515.9 420.1 L520.0 420.1 L525.5 416.8 L533.7 416.5 L537.8 413.2 L541.1 419.5 L544.1 415.2 L548.2 426.1 L551.5 418.7 L554.8 415.2 L558.3 420.6 L562.4 417.9 L566.5 412.4 L572.0 409.1 L576.1 410.5 L580.2 415.2 L584.3 412.4 L589.8 416.0 L596.6 413.2 L599.3 425.5 L601.3 438.7 L603.4 425.5 L606.2 414.6 L602.7 425.5 L605.5 414.6 L608.2 416.0 L610.9 409.7 L614.2 416.0 L617.8 410.5 L621.9 409.1 L626.0 408.6 L628.7 407.0 L630.6 413.2 L633.4 422.3 L635.5 409.7 L638.3 407.8 L642.4 411.3 L646.5 414.1 L650.6 420.1 L653.3 424.2 L656.1 426.1 L658.8 418.7 L661.5 416.0 L665.6 414.1 L668.4 422.8 L670.5 426.9 L672.5 416.0 L675.2 417.3 L679.3 428.3 L681.5 417.3 L684.8 415.2 L687.0 421.4 L690.2 416.0 L693.5 413.2 L696.3 419.5 L699.8 414.6 L703.9 411.3 L707.2 417.3 L710.7 416.0 L714.8 409.7 L718.1 407.8 L720.3 417.3 L722.5 409.7 L725.2 420.6 L728.0 415.2 L731.3 418.7 L733.4 414.6 L735.9 425.0 L738.6 416.0 L742.2 418.7 L746.3 415.2 L749.8 414.1 L753.1 418.7 L756.4 416.8 L759.1 421.4 L761.3 415.2 L764.1 426.9 L766.8 420.6 L770.1 416.8 L773.6 415.2 L777.2 424.2 L780.5 417.3 L783.8 422.3 L787.3 416.0 L790.6 421.4 L794.1 416.8 L797.4 425.0 L800.4 422.3 L802.9 431.0 L805.1 423.4 L807.8 432.4 L810.6 430.5 L813.3 437.9 L816.0 432.4 L818.2 441.4 L820.1 431.0 L822.0 443.3 L824.8 433.2 L828.3 431.0 L831.1 433.8 L833.0 438.7 L835.7 448.0 L837.9 440.6 L840.6 446.1 L843.4 439.2 L846.1 446.9 L849.4 440.6 L852.9 444.7 L857.0 435.1 L859.8 444.1 L862.5 438.7 L865.8 443.3 L869.3 439.2 L873.4 436.5 L876.2 440.6 L877.0 438.3 L879.3 444.2 L881.7 434.1 L884.0 437.2 L886.8 434.8 L889.8 439.5 L892.2 441.1 L894.5 444.2 L896.1 440.7" stroke="#ffff00" stroke-width="1" fill="none" stroke-linejoin="bevel" shape-rendering="crispEdges"/></g></svg>
<svg style="left:850px;top:400px" width="43" height="24" viewBox="0 0 43 24"><rect width="43" height="24" fill="#000"/><path d="M13.8 4.1 H6.9 Q5.6 4.1 5.6 5.6 Q5.6 7.3 6.9 7.3 H11.5 Q12.9 7.3 12.9 8.9 Q12.9 10.5 11.5 10.5 H3.6" fill="none" stroke="#fff" stroke-width="2.4"/><rect x="3.9" y="13.1" width="10.2" height="2.7" fill="#fff"/><rect x="7" y="13.1" width="3.2" height="7.7" fill="#fff"/><path d="M17 12 L20.3 6 Q22.9 1.6 25.4 6 L31 18 Q33.4 22.3 36 18.2 L39.9 12 M17 12.4 H40" fill="none" stroke="#fff" stroke-width="1.05"/></svg>
<div style="left:68px;top:502.8px;width:827.5px;height:17px;background:#f7f7f7;"></div>
<div style="left:68.5px;top:503.3px;width:17px;height:16px;background:#f0f0f0;border:1px solid;border-color:#fff #696969 #696969 #fff;box-shadow:inset -1px -1px 0 #a0a0a0,inset 1px 1px 0 #f8f8f8;"></div>
<div style="left:88px;top:503.3px;width:15.5px;height:16px;background:#f0f0f0;border:1px solid;border-color:#fff #696969 #696969 #fff;box-shadow:inset -1px -1px 0 #a0a0a0,inset 1px 1px 0 #f8f8f8;"></div>
<div style="left:878px;top:503.3px;width:17px;height:16px;background:#f0f0f0;border:1px solid;border-color:#fff #696969 #696969 #fff;box-shadow:inset -1px -1px 0 #a0a0a0,inset 1px 1px 0 #f8f8f8;"></div>
<svg style="left:68px;top:502.8px" width="828" height="17"><path d="M6.6 8.5 l3.8 -3.8 v7.6 z" fill="#000"/><path d="M820.9 8.5 l-3.8 -3.8 v7.6 z" fill="#000"/></svg>
<div style="left:67px;top:503px;width:2px;height:17px;background:#8c8888;"></div>
<div style="left:67px;top:398px;width:2px;height:1px;background:#000;"></div>
<div style="left:67px;top:408px;width:2px;height:1px;background:#000;"></div>
<div style="left:67px;top:418px;width:2px;height:1px;background:#000;"></div>
<div style="left:67px;top:429px;width:2px;height:1px;background:#000;"></div>
<div style="left:67px;top:439px;width:2px;height:1px;background:#000;"></div>
<div style="left:67px;top:450px;width:2px;height:1px;background:#000;"></div>
<div style="left:67px;top:460px;width:2px;height:1px;background:#000;"></div>
<div style="left:67px;top:470px;width:2px;height:1px;background:#000;"></div>
<div style="left:67px;top:481px;width:2px;height:1px;background:#000;"></div>
<div style="left:67px;top:491px;width:2px;height:1px;background:#000;"></div>
<div style="left:67px;top:502px;width:2px;height:1px;background:#000;"></div>
<svg style="left:0px;top:519px" width="1024" height="4"><path d="M117.5 0 V3.5 M151.5 0 V3.5 M178.5 0 V3.5 M200.5 0 V3.5 M218.5 0 V3.5 M234.5 0 V3.5 M248.5 0 V3.5 M261.5 0 V3.5 M344.5 0 V3.5 M392.5 0 V3.5 M427.5 0 V3.5 M453.5 0 V3.5 M475.5 0 V3.5 M494.5 0 V3.5 M510.5 0 V3.5 M524.5 0 V3.5 M536.5 0 V3.5 M619.5 0 V3.5 M668.5 0 V3.5 M702.5 0 V3.5 M729.5 0 V3.5 M751.5 0 V3.5 M769.5 0 V3.5 M785.5 0 V3.5 M799.5 0 V3.5 M812.5 0 V3.5 " stroke="#000" stroke-width="1"/></svg>
<span class="t" style="left:109.74px;top:522.00px;font-size:12px;line-height:16px;color:#000;letter-spacing:0.200px;">30</span>
<span class="t" style="left:170.86px;top:522.00px;font-size:12px;line-height:16px;color:#000;letter-spacing:0.200px;">50</span>
<span class="t" style="left:211.12px;top:522.00px;font-size:12px;line-height:16px;color:#000;letter-spacing:0.200px;">70</span>
<span class="t" style="left:250.36px;top:522.00px;font-size:12px;line-height:16px;color:#000;letter-spacing:0.200px;">100</span>
<span class="t" style="left:333.29px;top:522.00px;font-size:12px;line-height:16px;color:#000;letter-spacing:0.200px;">200</span>
<span class="t" style="left:381.80px;top:522.00px;font-size:12px;line-height:16px;color:#000;letter-spacing:0.200px;">300</span>
<span class="t" style="left:442.92px;top:522.00px;font-size:12px;line-height:16px;color:#000;letter-spacing:0.200px;">500</span>
<span class="t" style="left:483.18px;top:522.00px;font-size:12px;line-height:16px;color:#000;letter-spacing:0.200px;">700</span>
<span class="t" style="left:524.49px;top:522.00px;font-size:12px;line-height:16px;color:#000;letter-spacing:0.170px;">1.0k</span>
<span class="t" style="left:607.42px;top:522.00px;font-size:12px;line-height:16px;color:#000;letter-spacing:0.170px;">2.0k</span>
<span class="t" style="left:655.93px;top:522.00px;font-size:12px;line-height:16px;color:#000;letter-spacing:0.170px;">3.0k</span>
<span class="t" style="left:717.05px;top:522.00px;font-size:12px;line-height:16px;color:#000;letter-spacing:0.170px;">5.0k</span>
<span class="t" style="left:757.31px;top:522.00px;font-size:12px;line-height:16px;color:#000;letter-spacing:0.170px;">7.0k</span>
<span class="t" style="left:796.55px;top:522.00px;font-size:12px;line-height:16px;color:#000;letter-spacing:0.176px;">10.0k</span>
<span class="t" style="left:463.00px;top:533.50px;font-size:12px;line-height:16px;color:#000;letter-spacing:-0.121px;">Frequency (Hz)</span>
<span class="t" style="left:39.85px;top:390.80px;font-size:12px;line-height:16px;color:#000;letter-spacing:-0.175px;">20.0</span>
<span class="t" style="left:39.85px;top:401.20px;font-size:12px;line-height:16px;color:#000;letter-spacing:-0.175px;">10.0</span>
<span class="t" style="left:46.32px;top:411.60px;font-size:12px;line-height:16px;color:#000;letter-spacing:-0.167px;">0.0</span>
<span class="t" style="left:35.97px;top:422.00px;font-size:12px;line-height:16px;color:#000;letter-spacing:-0.164px;">-10.0</span>
<span class="t" style="left:35.97px;top:432.40px;font-size:12px;line-height:16px;color:#000;letter-spacing:-0.164px;">-20.0</span>
<span class="t" style="left:35.97px;top:442.80px;font-size:12px;line-height:16px;color:#000;letter-spacing:-0.164px;">-30.0</span>
<span class="t" style="left:35.97px;top:453.20px;font-size:12px;line-height:16px;color:#000;letter-spacing:-0.164px;">-40.0</span>
<span class="t" style="left:35.97px;top:463.60px;font-size:12px;line-height:16px;color:#000;letter-spacing:-0.164px;">-50.0</span>
<span class="t" style="left:35.97px;top:474.00px;font-size:12px;line-height:16px;color:#000;letter-spacing:-0.164px;">-60.0</span>
<span class="t" style="left:35.97px;top:484.40px;font-size:12px;line-height:16px;color:#000;letter-spacing:-0.164px;">-70.0</span>
<span class="t" style="left:35.97px;top:494.80px;font-size:12px;line-height:16px;color:#000;letter-spacing:-0.164px;">-80.0</span>
<span class="t" style="left:-48.25px;top:448.20px;width:139.50px;height:16px;line-height:16px;font-size:12.5px;color:#000;letter-spacing:0.356px;transform:rotate(-90deg);transform-origin:50% 50%;">Relative Amplitude (dB)</span>
<span class="t" style="left:923.00px;top:382.50px;font-size:12px;line-height:16px;color:#000;letter-spacing:-0.168px;text-decoration:underline;">Overlays</span>
<span class="t" style="left:901.00px;top:398.70px;width:17.00px;height:16px;line-height:16px;font-size:12px;color:#000;letter-spacing:-0.337px;transform:rotate(-90deg);transform-origin:50% 50%;">Set</span>
<span class="t" style="left:918.90px;top:399.90px;width:13.80px;height:16px;line-height:16px;font-size:12px;color:#000;letter-spacing:-1.104px;transform:rotate(-90deg);transform-origin:50% 50%;">On</span>
<div style="left:902px;top:419px;width:14px;height:14px;background:#f0f0f0;border:1px solid;border-color:#fff #696969 #696969 #fff;box-shadow:inset -1px -1px 0 #a0a0a0,inset 1px 1px 0 #f8f8f8;"></div>
<span class="t" style="left:905.46px;top:418.00px;font-size:12px;line-height:16px;color:#000;">1</span>
<div style="left:919px;top:420px;width:13.5px;height:13.5px;background:#fff;border:1px solid;border-color:#696969 #fff #fff #696969;box-shadow:inset 1px 1px 0 #a0a0a0;"></div>
<span class="t" style="left:935.20px;top:418.70px;font-size:12px;line-height:16px;color:#ff0000;letter-spacing:-0.261px;">Overlay 1</span>
<div style="left:902px;top:435px;width:14px;height:14px;background:#f0f0f0;border:1px solid;border-color:#fff #696969 #696969 #fff;box-shadow:inset -1px -1px 0 #a0a0a0,inset 1px 1px 0 #f8f8f8;"></div>
<span class="t" style="left:905.46px;top:434.00px;font-size:12px;line-height:16px;color:#000;">2</span>
<div style="left:919px;top:436px;width:13.5px;height:13.5px;background:#fff;border:1px solid;border-color:#696969 #fff #fff #696969;box-shadow:inset 1px 1px 0 #a0a0a0;"></div>
<span class="t" style="left:935.20px;top:434.70px;font-size:12px;line-height:16px;color:#ff00ff;letter-spacing:-0.261px;">Overlay 2</span>
<div style="left:902px;top:451px;width:14px;height:14px;background:#f0f0f0;border:1px solid;border-color:#fff #696969 #696969 #fff;box-shadow:inset -1px -1px 0 #a0a0a0,inset 1px 1px 0 #f8f8f8;"></div>
<span class="t" style="left:905.46px;top:450.00px;font-size:12px;line-height:16px;color:#000;">3</span>
<div style="left:919px;top:452px;width:13.5px;height:13.5px;background:#fff;border:1px solid;border-color:#696969 #fff #fff #696969;box-shadow:inset 1px 1px 0 #a0a0a0;"></div>
<span class="t" style="left:935.20px;top:450.70px;font-size:12px;line-height:16px;color:#0000ff;letter-spacing:-0.261px;">Overlay 3</span>
<div style="left:902px;top:467px;width:14px;height:14px;background:#f0f0f0;border:1px solid;border-color:#fff #696969 #696969 #fff;box-shadow:inset -1px -1px 0 #a0a0a0,inset 1px 1px 0 #f8f8f8;"></div>
<span class="t" style="left:905.46px;top:466.00px;font-size:12px;line-height:16px;color:#000;">4</span>
<div style="left:919px;top:468px;width:13.5px;height:13.5px;background:#fff;border:1px solid;border-color:#696969 #fff #fff #696969;box-shadow:inset 1px 1px 0 #a0a0a0;"></div>
<span class="t" style="left:935.20px;top:466.70px;font-size:12px;line-height:16px;color:#00ffff;letter-spacing:-0.261px;">Overlay 4</span>
<div style="left:899px;top:484.3px;width:63.7px;height:17.2px;background:#f0f0f0;border:1px solid;border-color:#fff #696969 #696969 #fff;box-shadow:inset -1px -1px 0 #a0a0a0,inset 1px 1px 0 #f8f8f8;"></div>
<span class="t" style="left:905.20px;top:485.30px;font-size:12px;line-height:16px;color:#000;letter-spacing:0.064px;">Options...</span>
<div style="left:67px;top:80px;width:72px;height:14.5px;background:#fff;border:1px solid #000;"></div>
<span class="t" style="left:71.60px;top:79.60px;font-size:11.5px;line-height:16px;color:#000;letter-spacing:-0.486px;">Stop analyzer</span>
<div style="left:390px;top:9px;width:100px;height:112px;background:linear-gradient(#bccbdc 0px,#c9d8e8 11px,#d6e3f1 22px,#d7e4f2 23px,#d7e4f2 100%);border:1px solid #555;border-radius:5px 5px 0 0;box-shadow:inset 1px 1px 0 rgba(255,255,255,.7),inset -1px 0 0 rgba(255,255,255,.5);"></div>
<div style="left:391.5px;top:32px;width:97px;height:89px;background:#f0f0f0;"></div>
<div style="left:488.5px;top:14px;width:1.5px;height:107px;background:#555;"></div>
<svg style="left:393px;top:12px" width="16" height="16" viewBox="0 0 16 16"><rect x="0.5" y="0.5" width="15" height="15" fill="#fff" stroke="#000"/><path d="M2.2 8.8 L5.7 5.3 L5.5 10.2 L10.5 5.3 L10.4 10.2 L13.7 7.2" stroke="#333" stroke-width="0.9" fill="none"/></svg>
<span class="t" style="left:413.40px;top:12.80px;font-size:12px;line-height:16px;color:#4c5a70;letter-spacing:-0.419px;">Gener...</span>
<div style="left:456px;top:12px;width:30.5px;height:17px;background:linear-gradient(#cbd9ea 0%,#c2d2e6 45%,#b5c8df 50%,#c0d1e5 100%);border:1px solid #8296b3;border-radius:2.5px;box-shadow:inset 0 0 0 1px rgba(255,255,255,.4);"></div>
<svg style="left:463.45px;top:14.5px" width="16" height="12" viewBox="-8 -6 16 12"><path d="M-5.3 -3.7 L-1.7 -3.7 L0 -1.7 L1.7 -3.7 L5.3 -3.7 L2 0 L5.3 3.6 L1.7 3.6 L0 1.7 L-1.7 3.6 L-5.3 3.6 L-2 0 Z" fill="#fff" stroke="#5a6270" stroke-width="1" stroke-linejoin="round"/></svg>
<div style="left:395px;top:36px;width:42px;height:26px;background:#f0f0f0;border:1px solid;border-color:#fff #696969 #696969 #fff;box-shadow:inset -1px -1px 0 #a0a0a0,inset 1px 1px 0 #f8f8f8;"></div>
<span class="t" style="left:404.05px;top:41.30px;font-size:12px;line-height:16px;color:#000;letter-spacing:0.162px;">Run</span>
<div style="left:443px;top:36px;width:42px;height:26px;background:#f0f0f0;border:1px solid;border-color:#fff #696969 #696969 #fff;box-shadow:inset -1px -1px 0 #a0a0a0,inset 1px 1px 0 #f8f8f8;"></div>
<span class="t" style="left:449.05px;top:41.30px;font-size:12px;line-height:16px;color:#000;letter-spacing:-0.037px;">Level</span>
<div style="left:395px;top:66px;width:89.5px;height:25.5px;background:#f0f0f0;border:1px solid;border-color:#fff #696969 #696969 #fff;box-shadow:inset -1px -1px 0 #a0a0a0,inset 1px 1px 0 #f8f8f8;"></div>
<span class="t" style="left:416.50px;top:71.00px;font-size:12px;line-height:16px;color:#a0a0a0;letter-spacing:0.032px;">Details...</span>
<div style="left:395px;top:96px;width:90px;height:23px;background:#fff;border:1px solid #696969;"></div>
<span class="t" style="left:399.50px;top:100.00px;font-size:12px;line-height:16px;color:#000;letter-spacing:0.214px;">Pink Noise</span>
<div style="left:466px;top:98px;width:17px;height:19px;background:#f0f0f0;border:1px solid;border-color:#fff #696969 #696969 #fff;box-shadow:inset -1px -1px 0 #a0a0a0,inset 1px 1px 0 #f8f8f8;"></div>
<svg style="left:465.5px;top:97.5px" width="18" height="20"><path d="M8.8 11.6 l-3.6 -3.6 h7.2 z" fill="#000"/></svg>
<div style="left:390px;top:120.5px;width:101px;height:1px;background:#f0f0f0;"></div>
<div style="left:390px;top:31px;width:2px;height:89.5px;background:#d7e4f2;"></div>
<div style="left:390px;top:120px;width:1px;height:1px;background:#333;"></div>
<div style="left:490px;top:17px;width:342px;height:99.5px;background:linear-gradient(#bccbdc 0px,#c9d8e8 14px,#d6e3f1 29px,#d7e4f2 30px,#d7e4f2 100%);border:1px solid #555;border-radius:5px 5px 0 0;box-shadow:inset 1px 1px 0 rgba(255,255,255,.7),inset -1px 0 0 rgba(255,255,255,.5);"></div>
<div style="left:497.5px;top:47px;width:326.5px;height:61.5px;background:#f0f0f0;"></div>
<div style="left:830.5px;top:22px;width:1.5px;height:94.5px;background:#555;"></div>
<div style="left:492px;top:115px;width:340px;height:1.5px;background:#555;"></div>
<svg style="left:500px;top:27px" width="16" height="16" viewBox="0 0 16 16"><rect x="0.5" y="0.5" width="15" height="15" fill="#fff" stroke="#000"/><path d="M2.2 8.8 L5.7 5.3 L5.5 10.2 L10.5 5.3 L10.4 10.2 L13.7 7.2" stroke="#333" stroke-width="0.9" fill="none"/></svg>
<span class="t" style="left:520.50px;top:28.30px;font-size:12px;line-height:16px;color:#4c5a70;letter-spacing:-0.294px;">Delay Finder</span>
<div style="left:791px;top:27px;width:31px;height:17px;background:linear-gradient(#cbd9ea 0%,#c2d2e6 45%,#b5c8df 50%,#c0d1e5 100%);border:1px solid #8296b3;border-radius:2.5px;box-shadow:inset 0 0 0 1px rgba(255,255,255,.4);"></div>
<svg style="left:798.7px;top:29.5px" width="16" height="12" viewBox="-8 -6 16 12"><path d="M-5.3 -3.7 L-1.7 -3.7 L0 -1.7 L1.7 -3.7 L5.3 -3.7 L2 0 L5.3 3.6 L1.7 3.6 L0 1.7 L-1.7 3.6 L-5.3 3.6 L-2 0 Z" fill="#fff" stroke="#5a6270" stroke-width="1" stroke-linejoin="round"/></svg>
<svg style="left:497px;top:47px" width="328" height="35" viewBox="0 0 328 35"><g transform="translate(9.5,0) scale(1.748,1)"><text x="0" y="29.5" font-family="Liberation Sans" font-size="30.8" fill="#000" stroke="#000" stroke-width="0.35">20.375 msec</text></g></svg>
<div style="left:497.5px;top:81.5px;width:326.5px;height:1px;background:#000;"></div>
<div style="left:500px;top:87.5px;width:60px;height:19px;background:#f0f0f0;border:1px solid;border-color:#fff #696969 #696969 #fff;box-shadow:inset -1px -1px 0 #a0a0a0,inset 1px 1px 0 #f8f8f8;"></div>
<span class="t" style="left:505.00px;top:89.30px;font-size:12px;line-height:16px;color:#000;letter-spacing:-0.136px;">Options...</span>
<div style="left:564px;top:87.5px;width:180px;height:19px;background:#f0f0f0;border:1px solid;border-color:#fff #696969 #696969 #fff;box-shadow:inset -1px -1px 0 #a0a0a0,inset 1px 1px 0 #f8f8f8;"></div>
<span class="t" style="left:574.50px;top:89.30px;font-size:12px;line-height:16px;color:#000;letter-spacing:0.021px;">Apply to Processing Delay --&gt;</span>
<div style="left:748px;top:87.5px;width:76px;height:19px;background:#fff;border:1px solid #696969;border-right:0;"></div>
<span class="t" style="left:751.50px;top:89.30px;font-size:12px;line-height:16px;color:#000;letter-spacing:-0.106px;">17.83</span>
<svg style="left:920px;top:16px" width="90" height="36" viewBox="920 16 90 36"><text x="924.8" y="41.2" font-family="Liberation Sans" font-weight="bold" font-size="29.5" fill="rgba(226,245,230,.93)" stroke="rgba(172,212,184,.85)" stroke-width="0.9" textLength="78.6" lengthAdjust="spacingAndGlyphs">MAGNIT LA</text><circle cx="981.4" cy="33" r="5.7" fill="none" stroke="rgba(232,84,94,.88)" stroke-width="2.2"/><rect x="980" y="37" width="3" height="3.6" fill="rgba(232,84,94,.95)"/><text x="958.5" y="47.7" font-family="Liberation Sans" font-weight="bold" font-size="5.6" fill="rgba(140,140,140,.9)" stroke="rgba(140,140,140,.6)" stroke-width="0.35" textLength="27.3" lengthAdjust="spacingAndGlyphs">CarAudio</text><text x="988" y="47.7" font-family="Liberation Sans" font-weight="bold" font-size="5.6" fill="rgba(228,64,64,.95)" stroke="rgba(228,64,64,.6)" stroke-width="0.35" textLength="15.9" lengthAdjust="spacingAndGlyphs">Team</text></svg>
</body></html>
